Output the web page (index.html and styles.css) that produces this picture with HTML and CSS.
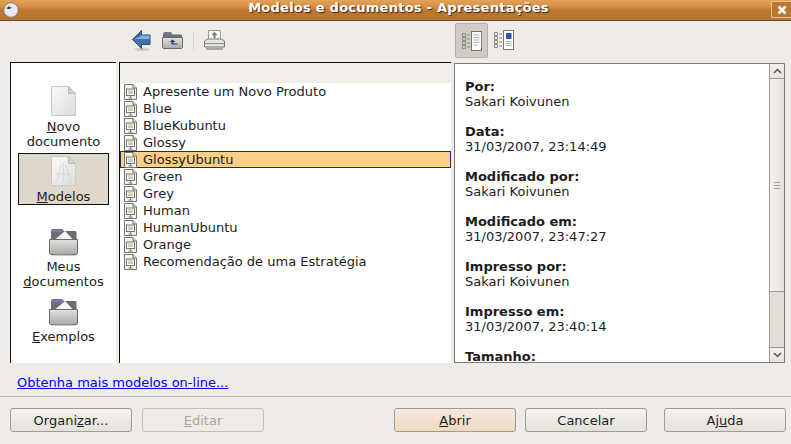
FILE: index.html
```html
<!DOCTYPE html>
<html lang="pt">
<head>
  <meta charset="UTF-8" />
  <title>Modelos e documentos - Apresentações</title>
  <link rel="stylesheet" href="styles.css">
</head>
<body>
  <svg class="defs" width="0" height="0">
    <defs>
      <linearGradient id="pageFill" x1="0" y1="0" x2="1" y2="1">
        <stop offset="0" stop-color="#fafafa"/><stop offset="1" stop-color="#dcdcdc"/>
      </linearGradient>
      <linearGradient id="folderFill" x1="0" y1="0" x2="0" y2="1">
        <stop offset="0" stop-color="#e2e2e0"/><stop offset="1" stop-color="#a9a9a6"/>
      </linearGradient>
      <symbol id="tpl" viewBox="0 0 13 16">
        <path d="M.5.5h8.500l3.500 3.500v11.500h-12z" fill="#f4f4f2" stroke="#77756f"/>
        <path d="M9 .5v3.500h3.500" fill="#ddd" stroke="#77756f"/>
        <rect x="2.500" y="5" width="8" height="6.500" fill="#fff" stroke="#77756f"/>
        <path d="M4 7h5" stroke="#d9a54e"/><path d="M4 9h5" stroke="#999"/>
        <path d="M6.500 11.500v2M4.500 14h4" stroke="#77756f"/>
      </symbol>
      <symbol id="folder" viewBox="0 0 29 28">
        <path d="M2 3l1-2h10l2 2h11.500l1 1v8H2z" fill="#6d6d6b"/>
        <path d="M3 1.500h10l1.500 3H2.500z" fill="#7b78ad"/>
        <path d="M6 11.500L16 3l8 8.500z" fill="#f6f6f4"/>
        <path d="M.5 11.500h28v14l-1 1h-26l-1-1z" fill="url(#folderFill)" stroke="#6a6a68"/>
        <ellipse cx="14.500" cy="27.300" rx="13" ry=".7" fill="#c4c4c2"/>
      </symbol>
      <symbol id="bigpage" viewBox="0 0 28 32">
        <path d="M1.500 1.500h17l7 7v22h-24z" fill="url(#pageFill)" stroke="#c9c9c7"/>
        <path d="M18.500 1.500v7h7z" fill="#d2d2d0" stroke="#bbb"/>
      </symbol>
      <symbol id="views" viewBox="0 0 20 20">
        <path d="M.5 2.500h3v3h-3zM.5 6.500h3v3h-3zM.5 10.500h3v3h-3zM.5 14.500h3v3h-3z" fill="none" stroke="#8b8b85"/>
        <path d="M5 4h3M5 8h3M5 12h3M5 16h3" stroke="#8b8b85"/>
        <rect x="9.500" y=".5" width="10" height="19" fill="#fff" stroke="#77756f"/>
      </symbol>
    </defs>
  </svg>

  <header class="titlebar">
    <svg class="app-icon" width="16" height="16" viewBox="0 0 16 16">
      <circle cx="8" cy="8" r="7.300" fill="#e8e8f2" stroke="#8a7a6a"/>
      <path d="M2.500 6l2.500-.5 1-1.500 1 1.500h2.500L6 7z" fill="#222"/>
    </svg>
    <span class="title">Modelos e documentos - Apresentações</span>
    <span class="close">
      <svg width="12" height="12" viewBox="0 0 12 12"><path d="M2.500 2.500l7 7M9.500 2.500l-7 7" stroke="#fff" stroke-width="2.600"/></svg>
    </span>
  </header>

  <div class="toolbar">
    <svg class="tool-back" width="20" height="21" viewBox="0 0 20 21">
      <ellipse cx="10" cy="19.500" rx="8" ry="1.500" fill="#c9c6c1"/>
      <path d="M.5 9.500L9.500 .5v4.500h8.500v9.500H9.500v4z" fill="#3f72ac" stroke="#24507f"/>
      <path d="M9.500 5.500h8v3.500H3z" fill="#88aed4"/>
    </svg>
    <svg class="tool-up" width="21" height="19" viewBox="0 0 21 19">
      <path d="M1 3.500l1-2.500h7l1.500 2.500H19l1 1v4H1z" fill="#6f6f6d"/>
      <path d="M2 1.500h7l1 1.500H1.500z" fill="#7b78ad"/>
      <path d="M.5 6.500h20v10l-1 1h-18l-1-1z" fill="url(#folderFill)" stroke="#6a6a68"/>
      <path d="M10.500 8.500l-3 2.500h2v2.500h6v-1h-4V11h2z" fill="#27477a"/>
    </svg>
    <span class="tool-sep"></span>
    <svg class="tool-print" width="21" height="21" viewBox="0 0 21 21">
      <path d="M4.500 .5h12v10h-12z" fill="#f6f6f4" stroke="#9a9a96"/>
      <path d="M10.500 2l-3 3h2v3h2V5h2z" fill="#77776f"/>
      <path d="M.5 11l3-2h14l3 2v6H.5z" fill="#e4e4e2" stroke="#777773"/>
      <path d="M.5 13.500h20" stroke="#8f8f8b"/>
      <path d="M2 18h17v2H2z" fill="#a8a8a4"/>
    </svg>
    <span class="toggle"><svg width="20" height="20"><use href="#views"/><path d="M11.500 4h6M11.500 6.500h6M11.500 9h6M11.500 11.500h6M11.500 14h4" stroke="#aaa"/></svg></span>
    <span class="toggle-off"><svg width="20" height="20"><use href="#views"/><rect x="12" y="3" width="5.500" height="6" fill="#2a5a9e"/><path d="M11.500 11.500h6M11.500 13.500h6M11.500 15.500h6" stroke="#aaa"/></svg></span>
  </div>

  <main class="panes">
    <nav class="side">
      <div class="side-item item-new">
        <svg width="28" height="32"><use href="#bigpage"/></svg>
        <span><u>N</u>ovo<br>documento</span>
      </div>
      <div class="side-item item-sel">
        <svg width="28" height="32"><use href="#bigpage"/><path d="M13.500 8v20M11 10L6 28M16 10l5 18M7 19h13" stroke="#c2c2c0" stroke-dasharray="1 1.500" fill="none"/></svg>
        <span><u>M</u>odelos</span>
      </div>
      <div class="side-item item-mine">
        <svg width="29" height="28"><use href="#folder"/></svg>
        <span>Meus<br><u>d</u>ocumentos</span>
      </div>
      <div class="side-item item-ex">
        <svg width="29" height="28"><use href="#folder"/></svg>
        <span><u>E</u>xemplos</span>
      </div>
    </nav>

    <section class="list">
      <div class="list-head"></div>
      <div class="row"><svg width="13" height="16"><use href="#tpl"/></svg>Apresente um Novo Produto</div>
      <div class="row"><svg width="13" height="16"><use href="#tpl"/></svg>Blue</div>
      <div class="row"><svg width="13" height="16"><use href="#tpl"/></svg>BlueKubuntu</div>
      <div class="row"><svg width="13" height="16"><use href="#tpl"/></svg>Glossy</div>
      <div class="row row-sel"><svg width="13" height="16"><use href="#tpl"/></svg>GlossyUbuntu</div>
      <div class="row"><svg width="13" height="16"><use href="#tpl"/></svg>Green</div>
      <div class="row"><svg width="13" height="16"><use href="#tpl"/></svg>Grey</div>
      <div class="row"><svg width="13" height="16"><use href="#tpl"/></svg>Human</div>
      <div class="row"><svg width="13" height="16"><use href="#tpl"/></svg>HumanUbuntu</div>
      <div class="row"><svg width="13" height="16"><use href="#tpl"/></svg>Orange</div>
      <div class="row"><svg width="13" height="16"><use href="#tpl"/></svg>Recomendação de uma Estratégia</div>
    </section>

    <section class="info">
      <div class="props">
        <dl><dt>Por:</dt><dd>Sakari Koivunen</dd></dl>
        <dl><dt>Data:</dt><dd>31/03/2007, 23:14:49</dd></dl>
        <dl><dt>Modificado por:</dt><dd>Sakari Koivunen</dd></dl>
        <dl><dt>Modificado em:</dt><dd>31/03/2007, 23:47:27</dd></dl>
        <dl><dt>Impresso por:</dt><dd>Sakari Koivunen</dd></dl>
        <dl><dt>Impresso em:</dt><dd>31/03/2007, 23:40:14</dd></dl>
        <dl><dt>Tamanho:</dt></dl>
      </div>
      <div class="scrollbar">
        <span class="sb-btn"><svg width="9" height="6"><path d="M1 5l3.500-3.500L8 5" fill="none" stroke="#555" stroke-width="1.500"/></svg></span>
        <span class="sb-thumb"><i></i><i></i><i></i></span>
        <span class="sb-trough"></span>
        <span class="sb-btn"><svg width="9" height="6"><path d="M1 1l3.500 3.500L8 1" fill="none" stroke="#555" stroke-width="1.500"/></svg></span>
      </div>
    </section>
  </main>

  <div class="linkline"><a href="#">Obtenha mais modelos on-line...</a></div>

  <footer class="buttons">
    <button class="btn">Organi<u>z</u>ar...</button>
    <button class="btn btn-off"><u>E</u>ditar</button>
    <span class="spacer"></span>
    <button class="btn btn-def"><u>A</u>brir</button>
    <button class="btn btn-cancel">Cancelar</button>
    <button class="btn btn-help">Aj<u>u</u>da</button>
  </footer>
</body>
</html>
```

FILE: styles.css
```css
* { margin: 0; padding: 0; box-sizing: border-box; }
html, body { width: 791px; height: 444px; overflow: hidden; }
body {
  background: #efebe7; color: #1c1c1c;
  font-family: "DejaVu Sans", sans-serif; font-size: 13px;
  display: flex; flex-direction: column;
}
.defs { position: absolute; }
svg { display: block; flex: none; }

.titlebar {
  height: 21px; flex: none; display: flex; align-items: flex-start; position: relative;
  background: linear-gradient(to bottom, #e4a258 0, #d38f46 35%, #bb7732 50%, #b9752f 100%);
  border-bottom: 1px solid #6f4a22;
}
.app-icon { margin: 2px 0 0 3px; }
.title {
  flex: 1; text-align: center; color: #fff; font-weight: bold; line-height: 15px;
  letter-spacing: .25px; padding-right: 13px;
  text-shadow: 1px 1px 1px #3d2a14;
}
.close {
  width: 20px; height: 17px; border: 1px solid #e8c49a; border-right: 0; border-radius: 2px 0 0 2px;
  background: #b9772f; display: flex; align-items: center; justify-content: center;
  position: absolute; right: 0; top: 1px;
}

.toolbar { height: 41px; flex: none; display: flex; align-items: flex-start; padding: 9px 0 0 132px; }
.tool-up { margin: 1px 0 0 10px; }
.tool-sep { width: 1px; height: 19px; background: #d8d4ce; margin: 1px 0 0 10px; }
.tool-print { margin-left: 10px; }
.toggle {
  width: 33px; height: 35px; margin: -7px 0 0 230px; background: #d2cbc3;
  border: 1px solid #b5aea6; border-radius: 2px;
  display: flex; align-items: center; justify-content: center;
}
.toggle-off { margin-left: 6px; }

.panes { height: 301px; flex: none; display: flex; padding-left: 10px; }
.side, .list { border-top: 1px solid #111; border-left: 1px solid #111; background: #fff; }
.side {
  width: 106px; display: flex; flex-direction: column; align-items: center;
  padding-top: 22px; overflow: hidden; text-align: center; line-height: 15px;
}
.side-item { width: 91px; display: flex; flex-direction: column; align-items: center; flex: none; }
.item-new { height: 68px; }
.item-new span { margin-top: 2px; }
.item-sel { height: 52px; background: #ded8cc; border: 1px solid #111; padding-top: 1px; }
.item-sel span { margin-top: 2px; }
.item-mine { margin-top: 23px; }
.item-mine span { margin-top: 3px; }
.item-ex { margin-top: 9px; }
.item-ex span { margin-top: 3px; }

.list { width: 332px; margin-left: 3px; overflow: hidden; }
.list-head { height: 20px; background: #f1eeea; }
.row { height: 17px; display: flex; align-items: center; padding-left: 4px; gap: 6px; white-space: nowrap; }
.row-sel { background: #fbcf85; border: 1px solid #1e2f5c; padding-left: 3px; }

.info {
  width: 331px; margin: 1px 0 0 3px; display: flex; overflow: hidden; background: #fff;
  border: 1px solid #7d7870;
}
.props { flex: 1; padding: 15px 0 0 10px; overflow: hidden; line-height: 15px; }
.props dl { margin-bottom: 15px; }
.props dt { font-weight: bold; }
.scrollbar { width: 15px; display: flex; flex-direction: column; background: #e3ddd8; border-left: 1px solid #a09a92; }
.sb-btn {
  height: 15px; flex: none; display: flex; align-items: center; justify-content: center;
  background: linear-gradient(to bottom, #f3f1ee, #e6e2dd); border-bottom: 1px solid #a09a92;
}
.sb-btn:last-child { border-bottom: 0; border-top: 1px solid #a09a92; }
.sb-thumb {
  height: 213px; flex: none; display: flex; flex-direction: column; align-items: center; justify-content: center; gap: 2px;
  background: linear-gradient(to right, #f4f2ef, #e6e2dd); border-bottom: 1px solid #a09a92;
}
.sb-thumb i { width: 6px; height: 1px; background: #a5a09a; }
.sb-trough { flex: 1; }

.linkline { height: 34px; flex: none; padding: 12px 0 0 17px; line-height: 15px; border-bottom: 1px solid #bdb8b1; }
.linkline a { color: #0000ff; }

.buttons { flex: 1; display: flex; align-items: flex-start; padding: 11px 5px 0 10px; }
.btn {
  width: 122px; height: 24px; font: inherit; color: inherit;
  background: linear-gradient(to bottom, #f6f4f1, #e4e0da);
  border: 1px solid #a09a92; border-radius: 3px;
}
.btn-off { margin-left: 10px; color: #a8a39c; background: #efebe7; border-color: #c4bfb8; }
.btn-def { background: linear-gradient(to bottom, #f6eade, #efd9c0); }
.btn-cancel { margin-left: 9px; }
.btn-help { margin-left: 17px; }
.spacer { flex: 1; }
```
